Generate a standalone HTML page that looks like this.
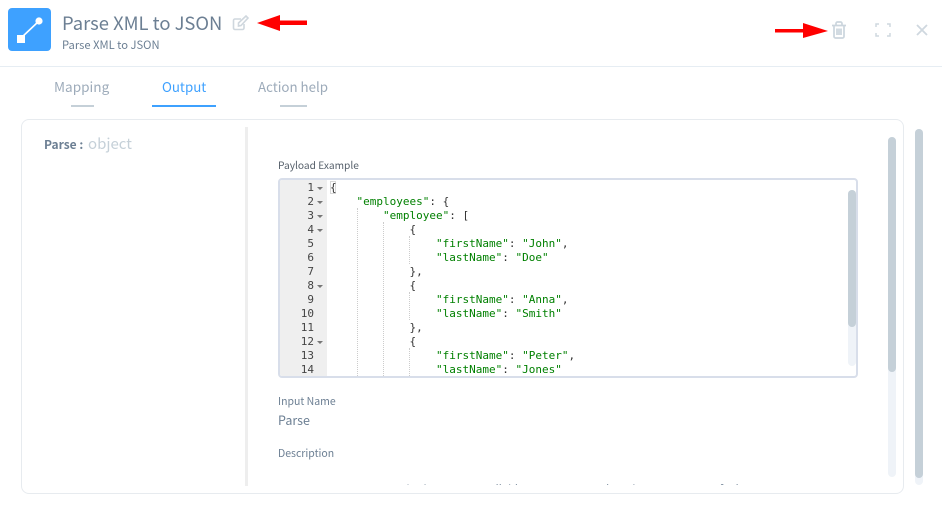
<!DOCTYPE html>
<html><head><meta charset="utf-8">
<style>
html,body{margin:0;padding:0;width:942px;height:511px;overflow:hidden;background:#fff}
body{font-family:"Noto Sans CJK JP","Liberation Sans",sans-serif;position:relative;color:#6c7f93}
.a{position:absolute;white-space:nowrap}
.code{position:absolute;left:330px;top:181px;font:11px/14px "DejaVu Sans Mono",monospace;color:#333;white-space:pre}
.code b{font-weight:normal;color:#008000}
.ln{position:absolute;left:280px;width:34px;text-align:right;top:181px;font:11px/14px "DejaVu Sans Mono",monospace;color:#444;white-space:pre}
.g{position:absolute;width:0;border-left:1px dotted #ccc}
.sb{position:absolute;width:8px;border-radius:4px;background:#eff3f8}
.th{position:absolute;width:8px;border-radius:4px;background:#c5d0d8}
</style></head><body>
<div class="a" style="left:8px;top:8px;width:43px;height:43px;background:#3ea1ff;border-radius:4px"></div>
<svg class="a" style="left:8px;top:8px" width="43" height="43"><path d="M13 30L31 13" stroke="#fff" stroke-width="1.6"/><circle cx="31" cy="13" r="3.6" fill="#fff"/><rect x="9" y="27" width="8" height="8" fill="#fff"/></svg>
<div class="a" style="left:62px;top:10px;font-size:18.400px;line-height:26px;color:#6c7f93">Parse XML to JSON</div>
<div class="a" style="left:62px;top:37px;font-size:11.200px;line-height:16px;color:#6c7f93">Parse XML to JSON</div>
<svg class="a" style="left:232px;top:15px" width="18" height="16" fill="none" stroke="#cfd7de" stroke-width="1.6"><path d="M12 9v4a1.5 1.5 0 0 1-1.5 1.5H3A1.5 1.5 0 0 1 1.5 13V5.5A1.5 1.5 0 0 1 3 4h6"/><path d="M6.5 8L14 1l2 2-7 7.5-2.5.5z"/></svg>
<svg class="a" style="left:255px;top:14px" width="55" height="20"><path d="M2 9L25 1V6.500H52V11H25V17z" fill="#f00"/></svg>
<svg class="a" style="left:774px;top:21px" width="56" height="20"><path d="M1 8H29V2L54 10 29 17V11.500H1z" fill="#f00"/></svg>
<svg class="a" style="left:831px;top:21px" width="16" height="18" fill="none" stroke="#cbd5dd" stroke-width="1.7"><path d="M1 4.500H15M3 4.500V15.500A1.500 1.500 0 0 0 4.500 17H11.500A1.500 1.500 0 0 0 13 15.500V4.500M5 4V2.500A1.500 1.500 0 0 1 6.500 1H9.500A1.500 1.500 0 0 1 11 2.500V4M6 7.500V14M8 7.500V14M10 7.500V14"/></svg>
<svg class="a" style="left:875px;top:23px" width="16" height="14" fill="none" stroke="#cfd8df" stroke-width="1.5"><path d="M4 1H1V4M12 1H15V4M4 13H1V10M12 13H15V10"/></svg>
<svg class="a" style="left:916px;top:24px" width="12" height="12" stroke="#cfd8df" stroke-width="1.800"><path d="M1 1L11 11M11 1L1 11"/></svg>
<div class="a" style="left:0;top:66px;width:942px;height:1px;background:#e6edf3"></div>

<div class="a" style="left:54px;top:76px;font-size:13.600px;line-height:20px;color:#9dabba">Mapping</div>
<div class="a" style="left:71px;top:105px;width:23px;height:2px;background:#c5d0d8"></div>
<div class="a" style="left:162px;top:77px;font-size:13.300px;line-height:20px;color:#3ea1ff">Output</div>
<div class="a" style="left:152px;top:105px;width:64px;height:2px;background:#3ea1ff"></div>
<div class="a" style="left:258px;top:77px;font-size:13.300px;line-height:20px;color:#9dabba">Action help</div>
<div class="a" style="left:280px;top:105px;width:27px;height:2px;background:#c5d0d8"></div>

<div class="a" style="left:21px;top:119px;width:881px;height:373px;border:1px solid #e7ebef;border-radius:8px"></div>
<div class="a" style="left:44px;top:136px;font-size:12px;line-height:17px;font-weight:700;color:#6c7f93">Parse :</div>
<div class="a" style="left:88px;top:133px;font-size:15px;line-height:21px;color:#c5d0d8">object</div>
<div class="a" style="left:245px;top:127px;width:3px;height:359px;background:#eee"></div>

<div class="a" style="left:278px;top:157px;font-size:10.200px;line-height:16px;color:#555f6a">Payload Example</div>
<div class="a" style="left:278px;top:178px;width:576px;height:196px;border:2px solid #d8deea;border-radius:4px;overflow:hidden">
<div style="width:47px;height:196px;background:#efefef"></div></div>
<div class="g" style="left:357px;top:208px;height:168px"></div>
<div class="g" style="left:383px;top:222px;height:154px"></div>
<div class="g" style="left:409px;top:236px;height:28px"></div>
<div class="g" style="left:409px;top:292px;height:28px"></div>
<div class="g" style="left:409px;top:348px;height:28px"></div>
<div class="ln">1
2
3
4
5
6
7
8
9
10
11
12
13
14</div>
<svg class="a" style="left:316px;top:181px" width="8" height="170" fill="#777"><path d="M1 6h6l-3 3zM1 20h6l-3 3zM1 34h6l-3 3zM1 48h6l-3 3zM1 104h6l-3 3zM1 160h6l-3 3z"/></svg>
<div class="a" style="left:330px;top:181px;width:6px;height:13px;border:1px solid #d8d8d8;box-sizing:border-box"></div>
<div class="code">{
    <b>"employees"</b>: {
        <b>"employee"</b>: [
            {
                <b>"firstName"</b>: <b>"John"</b>,
                <b>"lastName"</b>: <b>"Doe"</b>
            },
            {
                <b>"firstName"</b>: <b>"Anna"</b>,
                <b>"lastName"</b>: <b>"Smith"</b>
            },
            {
                <b>"firstName"</b>: <b>"Peter"</b>,
                <b>"lastName"</b>: <b>"Jones"</b></div>
<div class="sb" style="left:848px;top:190px;height:176px"></div>
<div class="th" style="left:848px;top:190px;height:137px"></div>

<div class="a" style="left:278px;top:394px;font-size:10.500px;line-height:16px;color:#6c7f93">Input Name</div>
<div class="a" style="left:278px;top:411px;font-size:12.500px;line-height:18px;color:#6c7f93">Parse</div>
<div class="a" style="left:278px;top:446px;font-size:10.500px;line-height:16px;color:#6c7f93">Description</div>
<div class="a" style="left:248px;top:470px;width:600px;height:15px;overflow:hidden">
<div class="a" style="left:30px;top:11px;font-size:11px;line-height:16px;color:#6c7f93">Type</div>
<div class="a" style="left:132px;top:11px;font-size:11px;line-height:16px;color:#6c7f93">Required</div>
<div class="a" style="left:233px;top:11px;font-size:11px;line-height:16px;color:#6c7f93">Nullable</div>
<div class="a" style="left:335px;top:11px;font-size:11px;line-height:16px;color:#6c7f93">Max length</div>
<div class="a" style="left:436px;top:11px;font-size:11px;line-height:16px;color:#6c7f93">Has Default</div>
</div>

<div class="sb" style="left:888px;top:137px;height:340px"></div>
<div class="th" style="left:888px;top:137px;height:235px"></div>
<div class="sb" style="left:915px;top:129px;height:356px"></div>
<div class="th" style="left:915px;top:129px;height:349px"></div>
</body></html>
